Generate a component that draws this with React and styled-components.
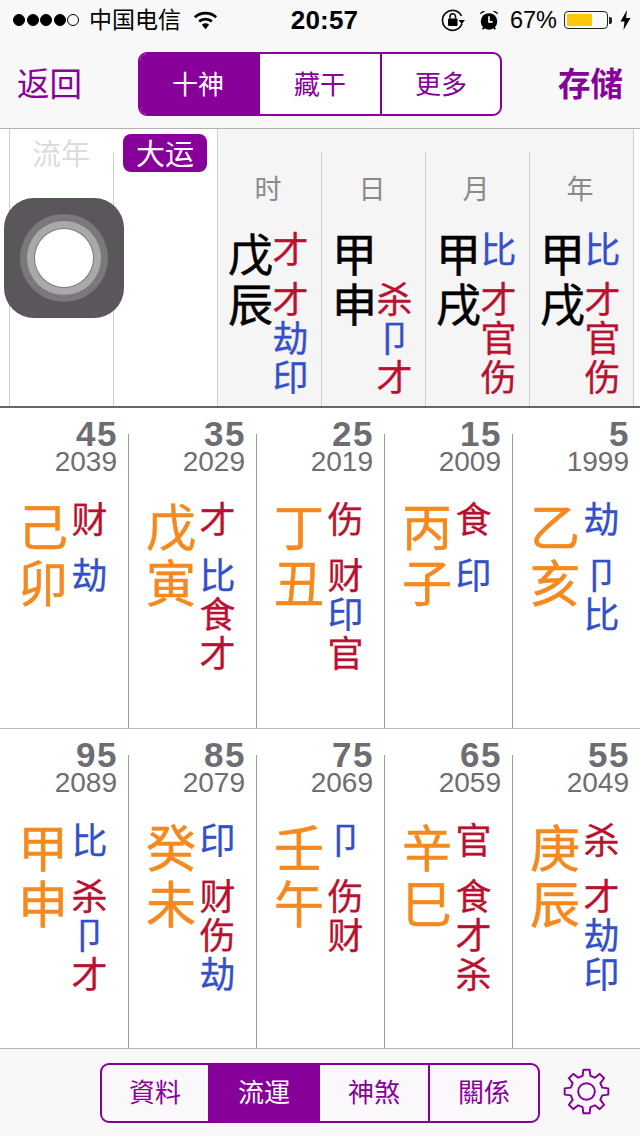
import styled, { createGlobalStyle } from "styled-components";

const PURPLE = "#87009a";
const CJK = `"Noto Sans CJK SC", "Noto Sans CJK TC", sans-serif`;
const BLUE_TIPS = "比劫印卩";

const GlobalStyle = createGlobalStyle`
  html, body { margin: 0; padding: 0; background: #fff; }
  body { font-family: ${CJK}; }
`;

const Screen = styled.div`
  position: relative;
  width: 640px;
  height: 1136px;
  overflow: hidden;
  background: #fff;
`;
const TopBars = styled.div`
  background: #f8f8f8;
  border-bottom: 1px solid #b2b2b2;
`;
const StatusBar = styled.div`
  height: 40px;
  display: grid;
  grid-template-columns: 1fr auto 1fr;
  align-items: center;
  color: #000;
`;
const StatusLeft = styled.div`
  display: flex;
  align-items: center;
  padding-left: 13px;
`;
const StatusRight = styled.div`
  display: flex;
  align-items: center;
  justify-content: flex-end;
  padding-right: 9px;
`;
const Dots = styled.div`
  display: flex;
  gap: 1.5px;
  margin-right: 10px;
`;
const Dot = styled.span`
  box-sizing: border-box;
  width: 12px;
  height: 12px;
  border-radius: 50%;
  border: 1px solid #000;
  background: ${(p) => (p.$on ? "#000" : "transparent")};
`;
const Carrier = styled.span`
  font-size: 23px;
  line-height: 36px;
  margin: 0 12px 4px 0;
`;
const Clock = styled.span`
  font-family: "Liberation Sans", sans-serif;
  font-size: 26px;
  font-weight: 700;
  letter-spacing: 0.2px;
  margin-left: 9px;
`;
const LockIcon = styled.svg`
  width: 24px;
  height: 24px;
  margin-right: 13px;
`;
const Percent = styled.span`
  font-family: "Liberation Sans", sans-serif;
  font-size: 23.5px;
  margin: 0 7px 0 10px;
`;
const Battery = styled.div`
  width: 44px;
  height: 18px;
  border: 1px solid #222;
  border-radius: 4px;
  padding: 2px;
  box-sizing: border-box;
  margin-right: 1px;
`;
const BatteryFill = styled.div`
  height: 100%;
  background: #fdc60a;
  border-radius: 1px;
`;
const BatteryNub = styled.div`
  width: 3px;
  height: 7px;
  background: #222;
  border-radius: 0 2px 2px 0;
  margin-right: 8px;
`;

const NavBar = styled.div`
  height: 88px;
  display: flex;
  align-items: center;
  justify-content: space-between;
  padding: 0 17px;
`;
const NavLink = styled.span`
  font-size: 32.5px;
  line-height: 84px;
  margin-bottom: 4px;
  color: ${PURPLE};
  font-weight: ${(p) => (p.$bold ? 700 : 400)};
`;
const Segments = styled.div`
  display: flex;
  box-sizing: border-box;
  width: ${(p) => p.$width}px;
  height: ${(p) => p.$height}px;
  border: 2px solid ${PURPLE};
  border-radius: 9px;
  overflow: hidden;
  background: ${(p) => p.$bg};
`;
const Segment = styled.div`
  flex: ${(p) => (p.$w ? `0 0 ${p.$w}px` : 1)};
  box-sizing: border-box;
  display: flex;
  align-items: center;
  justify-content: center;
  padding: 0 ${(p) => p.$nudge || 0}px 4px 0;
  font-size: 26px;
  color: ${(p) => (p.$active ? "#fff" : PURPLE)};
  background: ${(p) => (p.$active ? PURPLE : "transparent")};
  border-left: ${(p) => (p.$line ? `2px solid ${PURPLE}` : "none")};
`;

const PillarHeader = styled.div`
  display: grid;
  grid-template-columns: repeat(6, 104px) 1fr;
  height: 277px;
  padding-left: 9px;
  border-bottom: 2px solid #666;
`;
const HeaderCell = styled.div`
  box-sizing: border-box;
  background-color: ${(p) => (p.$shade ? "#f5f5f5" : "#fff")};
  background-image: linear-gradient(#cfcfcf, #cfcfcf);
  background-repeat: no-repeat;
  background-position: 0 ${(p) => (p.$full ? 0 : 23)}px;
  background-size: 1px 100%;
`;
const FaintLabel = styled.div`
  font-size: 29px;
  line-height: 46px;
  text-align: center;
  color: #dcdcdc;
`;
const Badge = styled.div`
  width: 84px;
  height: 38px;
  margin: 5px 0 0 10px;
  border-radius: 8px;
  background: ${PURPLE};
  color: #fff;
  font-size: 29px;
  line-height: 37px;
  text-align: center;
`;
const PillarTitle = styled.div`
  font-size: 27px;
  line-height: 40px;
  padding: 39px 2px 1px 0;
  text-align: center;
  color: #8a8a8a;
`;

const Chart = styled.div`
  display: flex;
  align-items: flex-start;
  padding: ${(p) => p.$top}px 0 0 ${(p) => p.$left}px;
`;
const Branches = styled.div`
  width: ${(p) => p.$size}px;
  flex: none;
  font-size: ${(p) => p.$size}px;
  line-height: ${(p) => p.$line}px;
  text-align: center;
  color: ${(p) => p.$color};
  -webkit-text-stroke: 0.5px ${(p) => p.$color};
`;
const Tips = styled.div`
  width: 37px;
  flex: none;
  display: flex;
  flex-direction: column;
  font-size: 36px;
  line-height: 39px;
  text-align: center;
  margin: ${(p) => p.$lift}px 0 0 ${(p) => p.$shift}px;
`;
const StemTip = styled.div`
  height: ${(p) => p.$height}px;
`;
const Tip = styled.div`
  color: ${(p) => (p.$blue ? "#3450c9" : "#b9112f")};
  -webkit-text-stroke: 0.3px ${(p) => (p.$blue ? "#3450c9" : "#b9112f")};
`;

const LuckRow = styled.div`
  display: grid;
  grid-template-columns: repeat(5, 128px);
  height: ${(p) => p.$height}px;
  border-bottom: 1px solid #b9b9b9;
  box-sizing: border-box;
`;
const LuckCell = styled.div`
  background-image: ${(p) => (p.$first ? "none" : "linear-gradient(#9c9c9c, #9c9c9c)")};
  background-repeat: no-repeat;
  background-position: 0 26px;
  background-size: 1px 100%;
`;
const Age = styled.div`
  font-family: "Liberation Sans", sans-serif;
  font-size: 35px;
  font-weight: 700;
  letter-spacing: 1.5px;
  line-height: 28px;
  padding-top: 12px;
  text-align: right;
  padding-right: 10px;
  color: #6d6d72;
`;
const Year = styled.div`
  font-family: "Liberation Sans", sans-serif;
  font-size: 28px;
  line-height: 27px;
  text-align: right;
  padding-right: 11px;
  color: #6d6d72;
`;

const TabBar = styled.div`
  height: 87px;
  display: flex;
  align-items: center;
  padding-left: 100px;
  gap: 23px;
  background: #f8f8f8;
`;
const GearIcon = styled.svg`
  width: 47px;
  height: 47px;
  flex: none;
  margin-bottom: 2px;
`;

const AssistiveTouch = styled.div`
  position: absolute;
  left: 4px;
  top: 198px;
  width: 120px;
  height: 120px;
  border-radius: 30px;
  background: #5a565b;
  display: flex;
  align-items: center;
  justify-content: center;
`;
const Ring = styled.div`
  width: ${(p) => p.$size}px;
  height: ${(p) => p.$size}px;
  border-radius: 50%;
  background: ${(p) => p.$color};
  display: flex;
  align-items: center;
  justify-content: center;
`;
const RingCore = styled(Ring)`
  box-shadow: 0 0 0 1px #7d7d7d;
`;

const gearPath = (() => {
  const cx = 24, cy = 24, teeth = 8, outer = 22.5, inner = 16.5;
  const pts = [];
  for (let i = 0; i < teeth; i++) {
    const a = (i * 2 * Math.PI) / teeth;
    const w = Math.PI / teeth;
    [[inner, -w * 0.62], [outer, -w * 0.36], [outer, w * 0.36], [inner, w * 0.62]].forEach(([r, d]) => {
      pts.push(`${(cx + r * Math.sin(a + d)).toFixed(2)} ${(cy - r * Math.cos(a + d)).toFixed(2)}`);
    });
  }
  return "M" + pts.join("L") + "Z";
})();

const header = [
  { label: "时", chars: "戊辰", stem: "才", tips: "才劫印" },
  { label: "日", chars: "甲申", stem: "", tips: "杀卩才" },
  { label: "月", chars: "甲戌", stem: "比", tips: "才官伤" },
  { label: "年", chars: "甲戌", stem: "比", tips: "才官伤" },
];
const luckRows = [
  [
    { age: 45, year: 2039, chars: "己卯", stem: "财", tips: "劫" },
    { age: 35, year: 2029, chars: "戊寅", stem: "才", tips: "比食才" },
    { age: 25, year: 2019, chars: "丁丑", stem: "伤", tips: "财印官" },
    { age: 15, year: 2009, chars: "丙子", stem: "食", tips: "印" },
    { age: 5, year: 1999, chars: "乙亥", stem: "劫", tips: "卩比" },
  ],
  [
    { age: 95, year: 2089, chars: "甲申", stem: "比", tips: "杀卩才" },
    { age: 85, year: 2079, chars: "癸未", stem: "印", tips: "财伤劫" },
    { age: 75, year: 2069, chars: "壬午", stem: "卩", tips: "伤财" },
    { age: 65, year: 2059, chars: "辛巳", stem: "官", tips: "食才杀" },
    { age: 55, year: 2049, chars: "庚辰", stem: "杀", tips: "才劫印" },
  ],
];

function TipChar({ ch }) {
  return <Tip $blue={BLUE_TIPS.includes(ch)}>{ch}</Tip>;
}

function Pillar({ chars, stem, tips, size, color, top, left, pitch, shift, lift }) {
  return (
    <Chart $top={top} $left={left}>
      <Branches $size={size} $line={pitch} $color={color}>
        {[...chars].map((c, i) => (
          <div key={i}>{c}</div>
        ))}
      </Branches>
      <Tips $shift={shift} $lift={lift}>
        <StemTip $height={pitch}>{stem && <TipChar ch={stem} />}</StemTip>
        {[...tips].map((c, i) => (
          <TipChar ch={c} key={i} />
        ))}
      </Tips>
    </Chart>
  );
}

export default function App() {
  return (
    <Screen>
      <GlobalStyle />
      <TopBars>
        <StatusBar>
          <StatusLeft>
            <Dots>
              {[1, 1, 1, 1, 0].map((on, i) => (
                <Dot $on={on} key={i} />
              ))}
            </Dots>
            <Carrier>中国电信</Carrier>
            <svg width="25" height="19" viewBox="0 0 27 20">
              <path d="M13.5 19.5 L9.6 14.6 A6.2 6.2 0 0 1 17.4 14.6 Z" fill="#000" />
              <path d="M6.6 10.9 A10.8 10.8 0 0 1 20.4 10.9" fill="none" stroke="#000" strokeWidth="3" />
              <path d="M2 6.4 A17.2 17.2 0 0 1 25 6.4" fill="none" stroke="#000" strokeWidth="3" />
            </svg>
          </StatusLeft>
          <Clock>20:57</Clock>
          <StatusRight>
            <LockIcon viewBox="0 0 24 24">
              <path d="M20.5 8 A10 10 0 1 0 21 15.5" fill="none" stroke="#000" strokeWidth="1.6" />
              <path d="M17.5 12 L24 12 L20.7 16 Z" fill="#000" />
              <rect x="7" y="10.5" width="9.5" height="7.5" rx="1" fill="#000" />
              <path d="M9 10.5 V8.5 A2.7 2.7 0 0 1 14.5 8.5 V10.5" fill="none" stroke="#000" strokeWidth="1.5" />
            </LockIcon>
            <svg width="22" height="22" viewBox="0 0 24 24">
              <circle cx="12" cy="13.5" r="9" fill="#000" />
              <path d="M2 6 A4.5 4.5 0 0 1 8 2.5 Z M22 6 A4.5 4.5 0 0 0 16 2.5 Z" fill="#000" />
              <path d="M12 8 V14 H16" fill="none" stroke="#fff" strokeWidth="1.8" />
              <path d="M5 22 L7 20 M19 22 L17 20" stroke="#000" strokeWidth="1.8" />
            </svg>
            <Percent>67%</Percent>
            <Battery>
              <BatteryFill style={{ width: "67%" }} />
            </Battery>
            <BatteryNub />
            <svg width="11" height="20" viewBox="0 0 11 20">
              <path d="M7 0 L0.5 11.5 H4.5 L3.5 20 L10.5 8 H6 Z" fill="#000" />
            </svg>
          </StatusRight>
        </StatusBar>
        <NavBar>
          <NavLink>返回</NavLink>
          <Segments $width={364} $height={64} $bg="#fff">
            <Segment $w={120} $nudge={4} $active>十神</Segment>
            <Segment $w={120}>藏干</Segment>
            <Segment $line>更多</Segment>
          </Segments>
          <NavLink $bold>存储</NavLink>
        </NavBar>
      </TopBars>

      <PillarHeader>
        <HeaderCell $full>
          <FaintLabel>流年</FaintLabel>
        </HeaderCell>
        <HeaderCell>
          <Badge>大运</Badge>
        </HeaderCell>
        {header.map((h, i) => (
          <HeaderCell $shade $full={i === 0} key={i}>
            <PillarTitle>{h.label}</PillarTitle>
            <Pillar
              chars={h.chars}
              stem={h.stem}
              tips={h.tips}
              size={45}
              pitch={50}
              color="#000"
              top={19}
              left={11}
              shift={-1}
              lift={0}
            />
          </HeaderCell>
        ))}
        <HeaderCell $full />
      </PillarHeader>

      {luckRows.map((row, r) => (
        <LuckRow $height={r === 0 ? 321 : 320} key={r}>
          {row.map((c, i) => (
            <LuckCell $first={i === 0} key={i}>
              <Age>{c.age}</Age>
              <Year>{c.year}</Year>
              <Pillar
                chars={c.chars}
                stem={c.stem}
                tips={c.tips}
                size={50}
                pitch={56}
                color="#f5891e"
                top={21}
                left={18}
                shift={3}
                lift={2}
              />
            </LuckCell>
          ))}
        </LuckRow>
      ))}

      <TabBar>
        <Segments $width={440} $height={60} $bg="#faf8fa">
          <Segment $w={106}>資料</Segment>
          <Segment $w={112} $active>流運</Segment>
          <Segment $w={108}>神煞</Segment>
          <Segment $line>關係</Segment>
        </Segments>
        <GearIcon viewBox="0 0 48 48">
          <path d={gearPath} fill="none" stroke={PURPLE} strokeWidth="2" strokeLinejoin="round" />
          <circle cx="24" cy="24" r="8.5" fill="none" stroke={PURPLE} strokeWidth="2" />
        </GearIcon>
      </TabBar>

      <AssistiveTouch>
        <Ring $size={88} $color="#7b787c">
          <Ring $size={74} $color="#a9a9a9">
            <RingCore $size={58} $color="#fff" />
          </Ring>
        </Ring>
      </AssistiveTouch>
    </Screen>
  );
}
